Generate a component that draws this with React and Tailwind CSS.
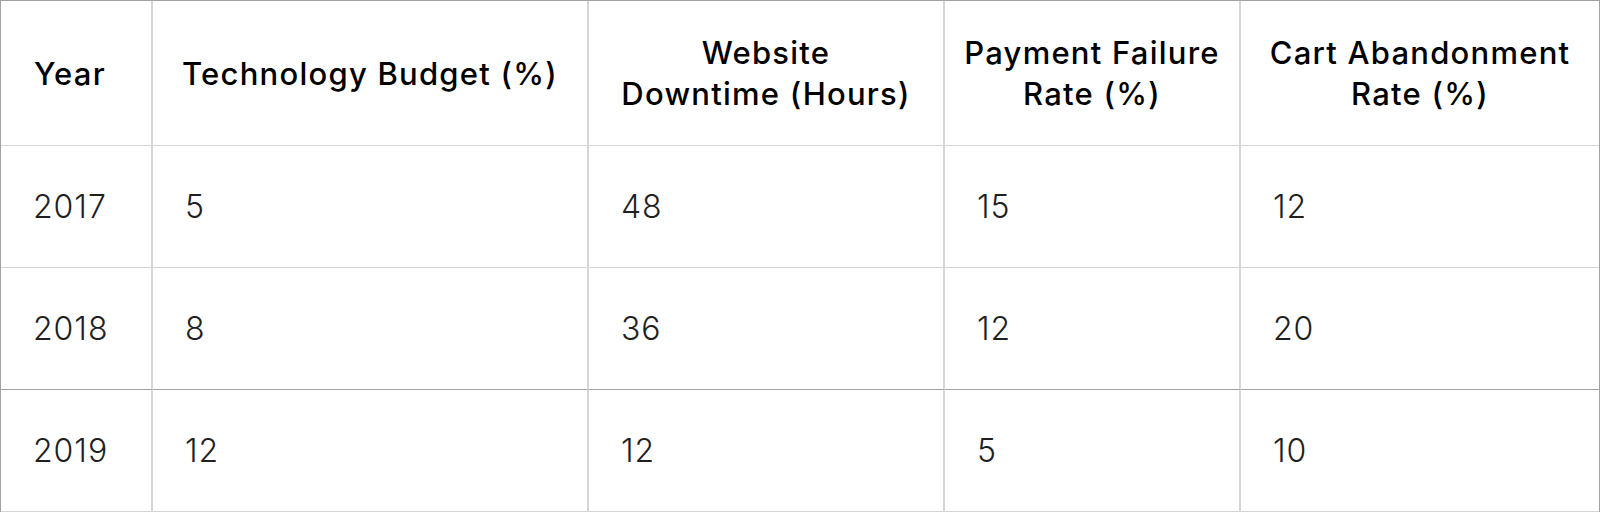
const headers = [
  { label: ["Year"], align: "start" },
  { label: ["Technology Budget (%)"] },
  { label: ["Website", "Downtime (Hours)"] },
  { label: ["Payment Failure", "Rate (%)"] },
  { label: ["Cart Abandonment", "Rate (%)"] },
];

const rows = [
  ["2017", "5", "48", "15", "12"],
  ["2018", "8", "36", "12", "20"],
  ["2019", "12", "12", "5", "10"],
];

export default function App() {
  return (
    <div className="h-[512px] w-[1600px] bg-white font-['Inter',sans-serif]">
      <div className="grid grid-cols-[152px_436px_356px_296px_1fr] border-l border-r border-t border-[#a3a3a3]">
        {headers.map((h, i) => (
          <div
            key={i}
            className={`flex h-[145px] items-center border-b border-b-[#d4d4d4] ${
              i < 4 ? "border-r-2 border-r-[#d6d6d6]" : ""
            } ${h.align === "start" ? "justify-start pl-[33px]" : "justify-center text-center"}`}
          >
            <div className="text-[31px] font-medium leading-[41px] tracking-[0.04em] text-black">
              {h.label.map((l, j) => (
                <div key={j}>{l}</div>
              ))}
            </div>
          </div>
        ))}
        {rows.map((r, ri) =>
          r.map((c, ci) => (
            <div
              key={ri + "-" + ci}
              className={`flex h-[122px] items-center pl-[32px] text-[32px] font-light tracking-[0.03em] text-[#1f1f1f] ${
                ri === 1 ? "border-b border-b-[#a3a3a3]" : "border-b border-b-[#d4d4d4]"
              } ${ci < 4 ? "border-r-2 border-r-[#d6d6d6]" : ""}`}
            >
              {c}
            </div>
          ))
        )}
      </div>
    </div>
  );
}
